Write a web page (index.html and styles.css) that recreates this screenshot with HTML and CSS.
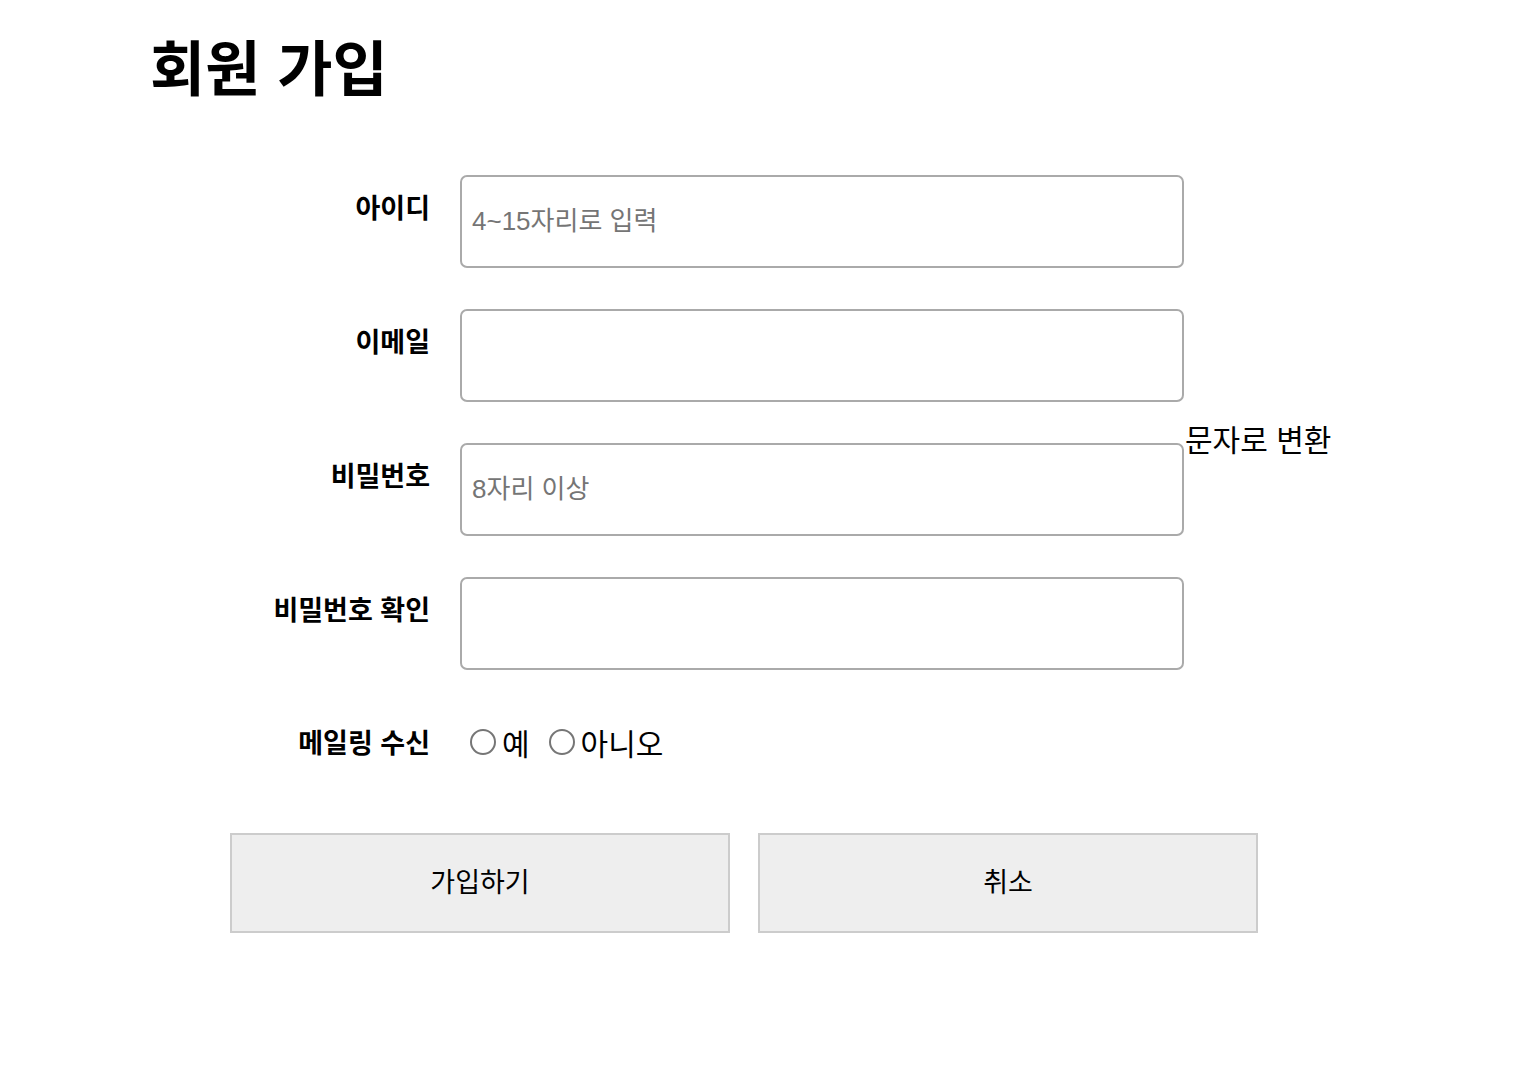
FILE: index.html
```html
<!DOCTYPE html>
<html lang="ko">
<head>
<meta charset="utf-8">
<title>회원 가입</title>
<link rel="stylesheet" href="styles.css">
</head>
<body>
<div class="page">
  <h1 class="title">회원 가입</h1>
  <form class="form">
    <div class="row">
      <label class="label">아이디</label>
      <input class="field" type="text" placeholder="4~15자리로 입력">
    </div>
    <div class="row">
      <label class="label">이메일</label>
      <input class="field" type="text">
    </div>
    <div class="row">
      <label class="label">비밀번호</label>
      <input class="field" type="password" placeholder="8자리 이상">
      <span class="convert">문자로 변환</span>
    </div>
    <div class="row">
      <label class="label">비밀번호 확인</label>
      <input class="field" type="password">
    </div>
    <div class="row radio-row">
      <span class="label">메일링 수신</span>
      <div class="options">
        <label class="option"><span class="radio"></span>예</label>
        <label class="option"><span class="radio"></span>아니오</label>
      </div>
    </div>
    <div class="buttons">
      <button type="button" class="btn">가입하기</button>
      <button type="button" class="btn">취소</button>
    </div>
  </form>
</div>
</body>
</html>
```
FILE: styles.css
```css
html, body {
  margin: 0;
  padding: 0;
  background: #fff;
}
body {
  font-family: "Liberation Sans", "Noto Sans CJK KR", sans-serif;
  color: #000;
}
.page {
  padding-left: 150px;
  padding-top: 1px;
}
.title {
  font-family: "Noto Sans CJK KR", sans-serif;
  font-weight: 700;
  font-size: 60px;
  line-height: 80px;
  margin: 24px 0 0 0;
}
.form {
  margin-top: 70px;
  display: flex;
  flex-direction: column;
  gap: 41px;
}
.row {
  display: flex;
  align-items: flex-start;
}
.label {
  width: 280px;
  flex: none;
  text-align: right;
  font-family: "Noto Sans CJK KR", sans-serif;
  font-weight: 700;
  font-size: 27px;
  line-height: 36px;
  padding-top: 14px;
  margin-right: 30px;
}
.field {
  box-sizing: border-box;
  width: 724px;
  height: 93px;
  border: 2px solid #aaa;
  border-radius: 7px;
  padding: 0 10px;
  margin: 0;
  font-family: "Liberation Sans", "Noto Sans CJK KR", sans-serif;
  font-size: 26px;
  background: #fff;
  outline: none;
}
.field::placeholder {
  color: #757575;
}
.convert {
  font-family: "Noto Sans CJK KR", sans-serif;
  font-size: 30px;
  line-height: 40px;
  margin-top: -25px;
  margin-left: 1px;
}
.radio-row {
  align-items: center;
  height: 62px;
}
.radio-row .label {
  padding-top: 0;
}
.options {
  display: flex;
  align-items: center;
  gap: 19px;
  padding-left: 10px;
}
.option {
  display: flex;
  align-items: center;
  gap: 6px;
  font-family: "Noto Sans CJK KR", sans-serif;
  font-size: 30px;
  line-height: 40px;
}
.radio {
  box-sizing: border-box;
  width: 26px;
  height: 26px;
  border: 2px solid #767676;
  border-radius: 50%;
  background: #fff;
}
.buttons {
  display: flex;
  gap: 28px;
  margin-left: 80px;
  margin-top: 19px;
}
.btn {
  box-sizing: border-box;
  width: 500px;
  height: 100px;
  border: 2px solid #ccc;
  background: #eee;
  font-family: "Noto Sans CJK KR", sans-serif;
  font-size: 27px;
  color: #000;
  padding: 0 0 6px 0;
  margin: 0;
}
```
